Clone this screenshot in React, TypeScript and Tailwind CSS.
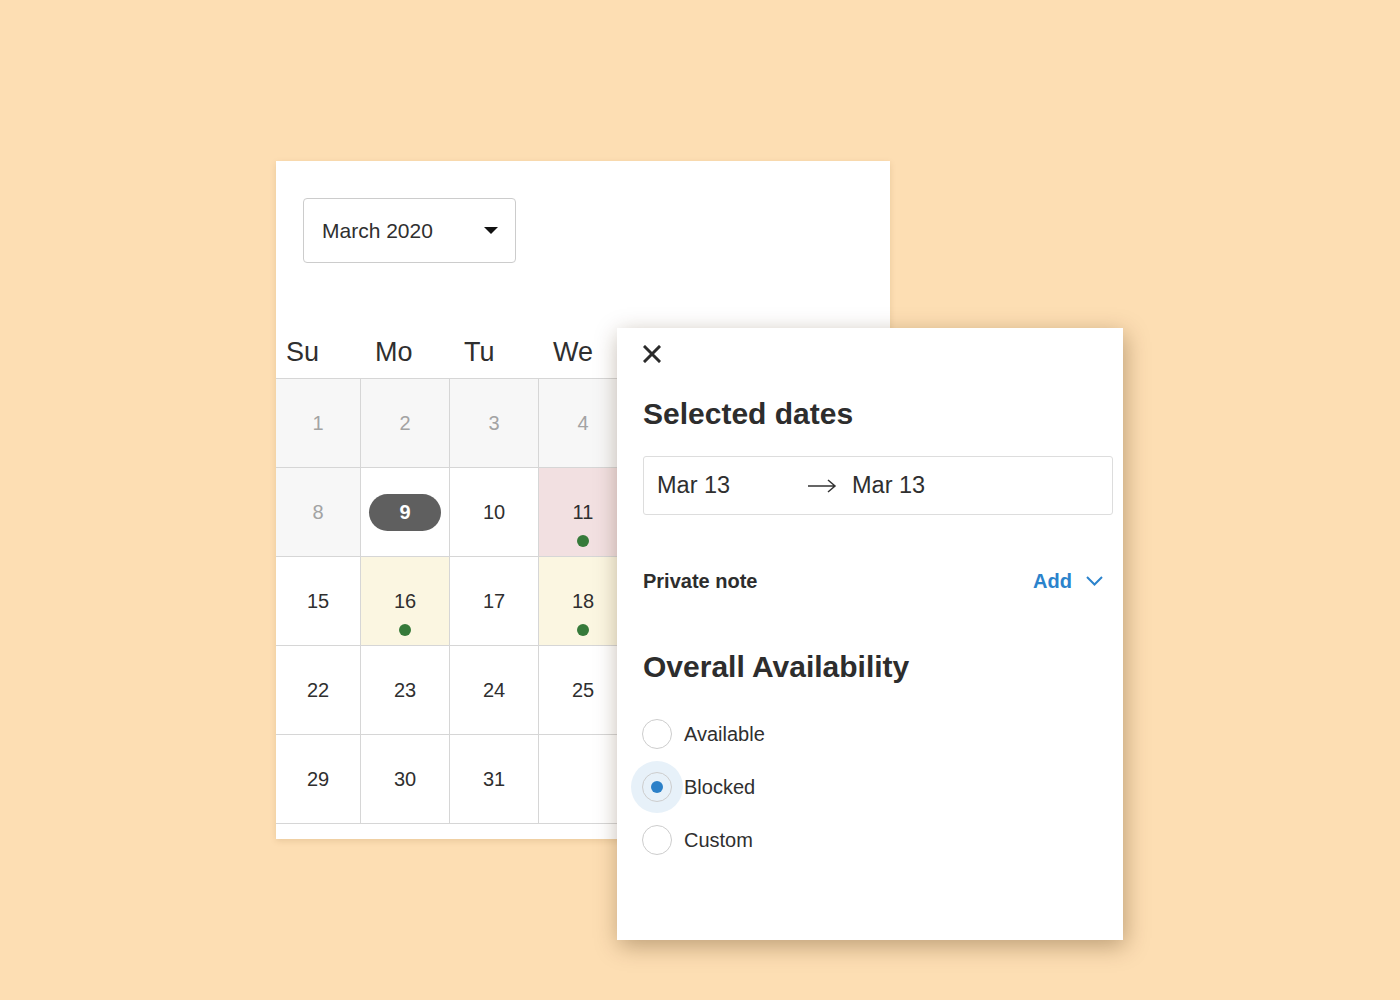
import React from 'react';

type Day = {
  n?: number;
  muted?: boolean;
  bg?: string;
  dot?: boolean;
  pill?: boolean;
};

// only Su..We are visible, the rest sits under the panel
const rows: Day[][] = [
  [{ n: 1, muted: true }, { n: 2, muted: true }, { n: 3, muted: true }, { n: 4, muted: true }, { muted: true }, { muted: true }, { muted: true }],
  [
    { n: 8, muted: true },
    { n: 9, pill: true },
    { n: 10 },
    { n: 11, bg: 'bg-[#f2e0e1]', dot: true },
    {},
    {},
    {},
  ],
  [
    { n: 15 },
    { n: 16, bg: 'bg-[#fbf6e1]', dot: true },
    { n: 17 },
    { n: 18, bg: 'bg-[#fbf6e1]', dot: true },
    {},
    {},
    {},
  ],
  [{ n: 22 }, { n: 23 }, { n: 24 }, { n: 25 }, {}, {}, {}],
  [{ n: 29 }, { n: 30 }, { n: 31 }, {}, {}, {}, {}],
];

const weekdays = ['Su', 'Mo', 'Tu', 'We'];

const DayCell = ({ day }: { day: Day }) => {
  const bg = day.bg ?? (day.muted ? 'bg-[#f7f7f7]' : 'bg-white');
  return (
    <div className={`relative flex h-[88px] items-center justify-center ${bg}`}>
      {day.pill ? (
        <span className="flex h-[37px] w-[72px] items-center justify-center rounded-full bg-[#5f5f5f] text-[20px] font-bold text-white">
          {day.n}
        </span>
      ) : (
        <span className={`text-[20px] ${day.muted ? 'text-[#a3a3a3]' : 'text-[#2f2f2f]'}`}>{day.n}</span>
      )}
      {day.dot && <span className="absolute bottom-[9px] h-[12px] w-[12px] rounded-full bg-[#367a3a]" />}
    </div>
  );
};

const Radio = ({ label, checked }: { label: string; checked?: boolean }) => (
  <label className="flex h-[30px] items-center gap-[12px]">
    <span className="relative flex h-[30px] w-[30px] items-center justify-center">
      {checked && <span className="absolute -inset-[11px] rounded-full bg-[#e7f1f9]" />}
      <span
        className={`relative flex h-[30px] w-[30px] items-center justify-center rounded-full border-[1.5px] border-[#cdcdcd] ${
          checked ? '' : 'bg-white'
        }`}
      >
        {checked && <span className="h-[12px] w-[12px] rounded-full bg-[#2b80c8]" />}
      </span>
    </span>
    <span className="text-[20px] text-[#2f2f2f]">{label}</span>
  </label>
);

const App = () => {
  return (
    <div
      className="relative h-[1000px] w-[1400px] overflow-hidden bg-[#fddeb3] pl-[276px] pt-[161px]"
      style={{ fontFamily: '"Liberation Sans", Arial, sans-serif' }}
    >
      {/* calendar card */}
      <div className="h-[678px] w-[614px] overflow-hidden bg-white shadow-[0_2px_6px_rgba(120,80,30,0.15)]">
        <div className="pl-[27px] pt-[37px]">
          <button className="flex h-[65px] w-[213px] items-center justify-between rounded-[4px] border border-[#cccccc] pl-[18px] pr-[17px] text-[21px] text-[#2f2f2f]">
            March 2020
            <svg width="14" height="7" viewBox="0 0 14 7">
              <path d="M0 0h14L7 7z" fill="#111" />
            </svg>
          </button>
        </div>
        <div className="flex h-[115px] items-end pb-[12px]">
          {weekdays.map((d, i) => (
            <div
              key={d}
              className={`${i === 0 ? 'w-[85px] pl-[10px]' : 'w-[89px] pl-[14px]'} text-[27px] leading-none text-[#2f2f2f]`}
            >
              {d}
            </div>
          ))}
        </div>
        <div className="w-[620px] bg-[#d6d6d6] py-px">
          <div className="grid grid-cols-[84px_88px_88px_88px_88px_88px_88px] gap-px">
            {rows.flat().map((day, i) => (
              <DayCell key={i} day={day} />
            ))}
          </div>
        </div>
      </div>

      {/* selected dates panel */}
      <div className="absolute left-[617px] top-[328px] h-[612px] w-[506px] bg-white pl-[26px] shadow-[2px_6px_22px_rgba(70,40,10,0.35)]">
        <div className="pt-[17px]">
          <svg width="18" height="18" viewBox="0 0 18 18">
            <path d="M2 2l14 14M16 2L2 16" stroke="#2b2b2b" strokeWidth="3" strokeLinecap="square" />
          </svg>
        </div>
        <h2 className="mt-[33px] text-[30px] font-bold leading-[36px] text-[#2d2d2d]">Selected dates</h2>
        <div className="mt-[24px] flex h-[59px] w-[470px] items-center rounded-[3px] border border-[#dddddd] pl-[13px] text-[23.5px] text-[#2f2f2f]">
          <span className="w-[150px]">Mar 13</span>
          <svg width="30" height="14" viewBox="0 0 30 14" className="mr-[15px]">
            <path d="M1 7h27M21 1l7 6-7 6" stroke="#333" strokeWidth="1.5" fill="none" />
          </svg>
          <span>Mar 13</span>
        </div>
        <div className="mt-[51px] flex h-[30px] w-[460px] items-center justify-between">
          <span className="text-[20px] font-bold text-[#2d2d2d]">Private note</span>
          <span className="flex items-center gap-[14px] text-[20px] font-bold text-[#2b83cc]">
            Add
            <svg width="17" height="10" viewBox="0 0 17 10">
              <path d="M1 1l7.5 7.5L16 1" stroke="#2b83cc" strokeWidth="2" fill="none" />
            </svg>
          </span>
        </div>
        <h2 className="mt-[53px] text-[30px] font-bold leading-[36px] text-[#2d2d2d]">Overall Availability</h2>
        <div className="-ml-px mt-[34px] flex flex-col gap-[23px]">
          <Radio label="Available" />
          <Radio label="Blocked" checked />
          <Radio label="Custom" />
        </div>
      </div>
    </div>
  );
};

export default App;
